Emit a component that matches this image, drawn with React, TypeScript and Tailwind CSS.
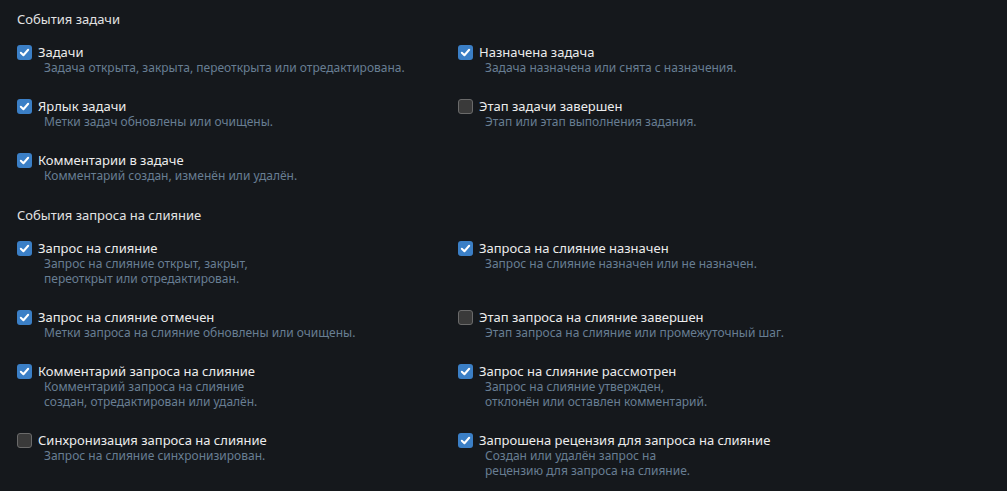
import React, { FC } from 'react';

type Item = { label: string; desc: string[]; checked: boolean };

const taskLeft: Item[] = [
  { label: 'Задачи', desc: ['Задача открыта, закрыта, переоткрыта или отредактирована.'], checked: true },
  { label: 'Ярлык задачи', desc: ['Метки задач обновлены или очищены.'], checked: true },
  { label: 'Комментарии в задаче', desc: ['Комментарий создан, изменён или удалён.'], checked: true },
];
const taskRight: Item[] = [
  { label: 'Назначена задача', desc: ['Задача назначена или снята с назначения.'], checked: true },
  { label: 'Этап задачи завершен', desc: ['Этап или этап выполнения задания.'], checked: false },
];

const prLeft: Item[] = [
  { label: 'Запрос на слияние', desc: ['Запрос на слияние открыт, закрыт,', 'переоткрыт или отредактирован.'], checked: true },
  { label: 'Запрос на слияние отмечен', desc: ['Метки запроса на слияние обновлены или очищены.'], checked: true },
  { label: 'Комментарий запроса на слияние', desc: ['Комментарий запроса на слияние', 'создан, отредактирован или удалён.'], checked: true },
  { label: 'Синхронизация запроса на слияние', desc: ['Запрос на слияние синхронизирован.'], checked: false },
];
const prRight: Item[] = [
  { label: 'Запроса на слияние назначен', desc: ['Запрос на слияние назначен или не назначен.'], checked: true },
  { label: 'Этап запроса на слияние завершен', desc: ['Этап запроса на слияние или промежуточный шаг.'], checked: false },
  { label: 'Запрос на слияние рассмотрен', desc: ['Запрос на слияние утвержден,', 'отклонён или оставлен комментарий.'], checked: true },
  { label: 'Запрошена рецензия для запроса на слияние', desc: ['Создан или удалён запрос на', 'рецензию для запроса на слияние.'], checked: true },
];

const Box: FC<{ checked: boolean }> = ({ checked }) =>
  checked ? (
    <span className="flex h-[15px] w-[15px] shrink-0 items-center justify-center rounded-[3px] bg-[#3b7fc6]">
      <svg width="11" height="11" viewBox="0 0 12 12" fill="none">
        <path d="M2 6.3 L4.8 9 L10 3" stroke="#ffffff" strokeWidth="2.2" strokeLinecap="round" strokeLinejoin="round" />
      </svg>
    </span>
  ) : (
    <span className="h-[15px] w-[15px] shrink-0 rounded-[3px] border border-[#6a6a6a] bg-[#3a3a3a]" />
  );

const Row: FC<{ item: Item }> = ({ item }) => (
  <div>
    <div className="flex items-center gap-[6px]">
      <Box checked={item.checked} />
      <span className="text-[13px] leading-[16px] text-[#ececec]">{item.label}</span>
    </div>
    <div className="ml-[27px] text-[12px] leading-[15px] text-[#687e93]">
      {item.desc.map((d) => (
        <div key={d}>{d}</div>
      ))}
    </div>
  </div>
);

const Section: FC<{ title: string; left: Item[]; right: Item[] }> = ({ title, left, right }) => {
  const rows = Math.max(left.length, right.length);
  return (
    <div>
      <div className="mb-[17px] text-[13px] leading-[16px] text-[#e2e2e2]">{title}</div>
      <div className="grid grid-cols-[441px_1fr] gap-y-[23px]">
        {Array.from({ length: rows }).map((_, i) => (
          <React.Fragment key={i}>
            {left[i] ? <Row item={left[i]} /> : <div />}
            {right[i] ? <Row item={right[i]} /> : <div />}
          </React.Fragment>
        ))}
      </div>
    </div>
  );
};

export default function App() {
  return (
    <div className="min-h-screen bg-[#15181c] pl-[17px] pt-[11px] font-['Noto_Sans',sans-serif]">
      <Section title="События задачи" left={taskLeft} right={taskRight} />
      <div className="mt-[24px]">
        <Section title="События запроса на слияние" left={prLeft} right={prRight} />
      </div>
    </div>
  );
}
